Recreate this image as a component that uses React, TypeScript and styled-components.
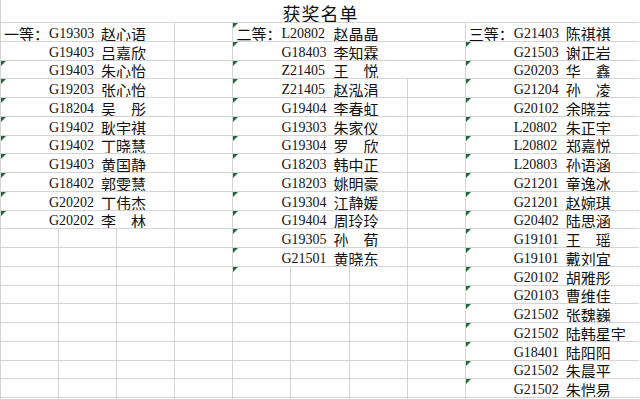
import React from "react"
import styled, { createGlobalStyle } from "styled-components"

type Entry = { prefix?: string; code: string; name: string }

const COL_W = 58.1
const ROW_H = 18.75
const COLS = 11
const ROWS = 21

const first: Entry[] = [
  { prefix: "一等：", code: "G19303", name: "赵心语" },
  { code: "G19403", name: "吕嘉欣" },
  { code: "G19403", name: "朱心怡" },
  { code: "G19203", name: "张心怡" },
  { code: "G18204", name: "吴　彤" },
  { code: "G19402", name: "耿宇祺" },
  { code: "G19402", name: "丁晓慧" },
  { code: "G19403", name: "黄国静" },
  { code: "G18402", name: "郭雯慧" },
  { code: "G20202", name: "丁伟杰" },
  { code: "G20202", name: "李　林" },
]

const second: Entry[] = [
  { prefix: "二等：", code: "L20802", name: "赵晶晶" },
  { code: "G18403", name: "李知霖" },
  { code: "Z21405", name: "王　悦" },
  { code: "Z21405", name: "赵泓涓" },
  { code: "G19404", name: "李春虹" },
  { code: "G19303", name: "朱家仪" },
  { code: "G19304", name: "罗　欣" },
  { code: "G18203", name: "韩中正" },
  { code: "G18203", name: "姚明豪" },
  { code: "G19304", name: "江静媛" },
  { code: "G19404", name: "周玲玲" },
  { code: "G19305", name: "孙　荀" },
  { code: "G21501", name: "黄晓东" },
]

const third: Entry[] = [
  { prefix: "三等：", code: "G21403", name: "陈祺祺" },
  { code: "G21503", name: "谢正岩" },
  { code: "G20203", name: "华　鑫" },
  { code: "G21204", name: "孙　凌" },
  { code: "G20102", name: "余晓芸" },
  { code: "L20802", name: "朱正宇" },
  { code: "L20802", name: "郑嘉悦" },
  { code: "L20803", name: "孙语涵" },
  { code: "G21201", name: "童逸冰" },
  { code: "G21201", name: "赵婉琪" },
  { code: "G20402", name: "陆思涵" },
  { code: "G19101", name: "王　瑶" },
  { code: "G19101", name: "戴刘宜" },
  { code: "G20102", name: "胡雅彤" },
  { code: "G20103", name: "曹维佳" },
  { code: "G21502", name: "张魏巍" },
  { code: "G21502", name: "陆韩星宇" },
  { code: "G18401", name: "陆阳阳" },
  { code: "G21502", name: "朱晨平" },
  { code: "G21502", name: "朱恺易" },
]

type Section = { col: number; list: Entry[]; span: (r: number) => number; flag: (r: number) => boolean }

// each prize group starts in its own column; the filled cell covers the empty ones it spills into
const sections: Section[] = [
  { col: 0, list: first, span: () => 3, flag: (r) => r >= 3 && r <= 11 },
  { col: 4, list: second, span: (r) => (r <= 3 ? 4 : 3), flag: (r) => r <= 14 },
  { col: 8, list: third, span: () => 3, flag: (r) => r >= 2 && r <= 20 },
]

export default function App() {
  const cells: React.ReactNode[] = []
  for (let r = 1; r <= ROWS; r++) {
    let c = 0
    while (c < COLS) {
      const section = sections.find((s) => s.col === c)
      const entry = section ? section.list[r - 1] : undefined
      const span = section && entry ? section.span(r) : 1
      cells.push(
        <S.Cell key={`${r}-${c}`} $span={span} $flag={!!section && section.flag(r)}>
          {entry && (
            <>
              <S.Prefix>{entry.prefix}</S.Prefix>
              <S.Code>{entry.code}</S.Code>
              <S.Name>{entry.name}</S.Name>
            </>
          )}
        </S.Cell>
      )
      c += span
    }
  }

  return (
    <>
      <GlobalStyle />
      <S.Page>
        <S.Title>获奖名单</S.Title>
        <S.Grid>{cells}</S.Grid>
      </S.Page>
    </>
  )
}

const GlobalStyle = createGlobalStyle`
  html, body {
    margin: 0;
    padding: 0;
    background: #ffffff;
    overflow: hidden;
  }
`

const S = {
  Page: styled.div`
    width: 640px;
    height: 399px;
    overflow: hidden;
    background: #ffffff;
    color: #111111;
    font-family: "Liberation Serif", "Noto Sans CJK SC", serif;
  `,
  Title: styled.div`
    box-sizing: border-box;
    height: 22px;
    padding-top: 3px;
    border-left: 1px solid #d4d4d4;
    font-family: "Noto Sans CJK SC", serif;
    font-size: 18px;
    letter-spacing: 1px;
    line-height: 20px;
    text-align: center;
  `,
  Grid: styled.div`
    display: grid;
    grid-template-columns: repeat(${COLS}, ${COL_W}px);
    grid-auto-rows: ${ROW_H}px;
  `,
  Cell: styled.div<{ $span: number; $flag: boolean }>`
    grid-column: span ${(p) => p.$span};
    position: relative;
    box-sizing: border-box;
    display: flex;
    padding: 3.75px 0 0 3px;
    border-top: 1px solid #d4d4d4;
    border-left: 1px solid #d4d4d4;
    font-size: 15px;
    line-height: 14px;
    white-space: nowrap;

    &::before {
      content: "";
      display: ${(p) => (p.$flag ? "block" : "none")};
      position: absolute;
      top: 0;
      left: 0;
      border-top: 5px solid #1f6b35;
      border-right: 5px solid transparent;
    }
  `,
  Prefix: styled.span`
    flex: 0 0 45px;
    font-family: "Noto Sans CJK SC", serif;
  `,
  Code: styled.span`
    flex: 0 0 52px;
    font-size: 14px;
  `,
  Name: styled.span`
    font-family: "Noto Sans CJK SC", serif;
  `,
}
